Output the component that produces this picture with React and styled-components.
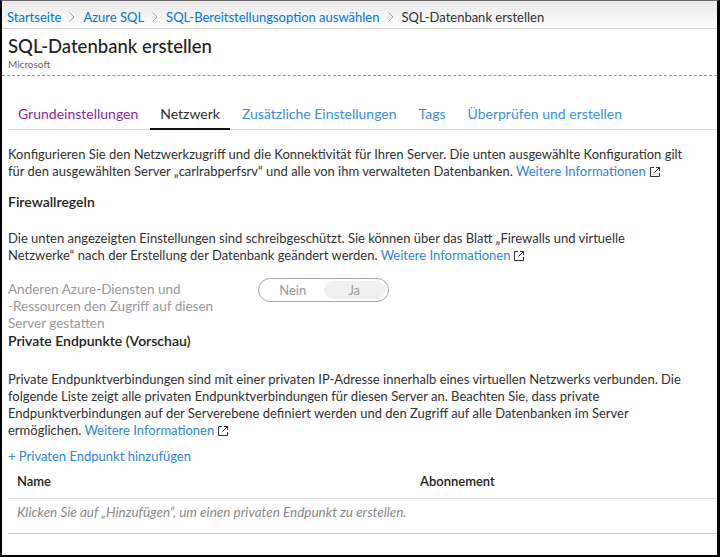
import React from 'react';
import styled, { createGlobalStyle } from 'styled-components';

const GlobalStyle = createGlobalStyle`
  body {
    margin: 0;
    background: #fff;
    font-family: Lato, "Noto Sans", sans-serif;
    color: #323130;
  }
`;

const Frame = styled.div`
  box-sizing: border-box;
  width: 720px;
  height: 557px;
  border-top: 1px solid #6b6b6b;
  border-left: 2px solid #000;
  border-right: 3px solid #000;
  border-bottom: 2px solid #000;
  overflow: hidden;
  background: #fff;
`;

const Breadcrumb = styled.nav`
  box-sizing: border-box;
  height: 28px;
  display: flex;
  align-items: center;
  padding: 4px 5px 0;
  background: linear-gradient(#e9e9e9, #fdfdfd);
  border-bottom: 1px solid #d0d0d0;
  font-size: 13px;
`;

const Crumb = styled.span`
  color: ${p => (p.current ? '#323130' : '#0078d4')};
`;

const Chevron = styled.span`
  display: inline-flex;
  margin: 0 8px;
`;

const Header = styled.header`
  padding: 5px 6px 5px;
  border-bottom: 1px dashed #2bc3ea;
`;

const Title = styled.h1`
  margin: 0;
  font-size: 18.5px;
  font-weight: 500;
  line-height: 24px;
  color: #222;
`;

const Sub = styled.div`
  font-size: 10px;
  color: #666;
  line-height: 12px;
`;

const Body = styled.main`
  padding: 0 0 0 6px;
`;

const TabList = styled.div`
  margin-top: 28px;
  display: flex;
  gap: 2px;
  border-bottom: 1px solid #d6d6d6;
`;

const Tab = styled.div`
  padding: 0 10px;
  height: 26px;
  line-height: 20px;
  font-size: 14px;
  color: ${p => (p.active ? '#323130' : p.visited ? '#8a2a9b' : '#3a8fdc')};
  border-bottom: 2px solid ${p => (p.active ? '#111' : 'transparent')};
  margin-bottom: -1px;
  box-sizing: border-box;
`;

const Para = styled.p`
  margin: ${p => p.mt || 0}px 6px 0 0;
  font-size: 13px;
  line-height: 17px;
`;

const Heading = styled.h2`
  margin: ${p => p.mt || 0}px 0 0;
  font-size: 14px;
  line-height: 17px;
  font-weight: 600;
  color: #222;
`;

const Link = styled.a`
  color: #2f86d4;
  text-decoration: none;

  svg {
    margin-left: 4px;
    vertical-align: -1px;
  }
`;

const ToggleRow = styled.div`
  margin-top: 17px;
  display: grid;
  grid-template-columns: 250px auto;
  align-items: start;
`;

const MutedLabel = styled.div`
  font-size: 13.5px;
  line-height: 17px;
  color: #9a9a9a;
`;

const Toggle = styled.div`
  margin-top: -3px;
  width: 131px;
  height: 24px;
  box-sizing: border-box;
  border: 1px solid #a6a6a6;
  border-radius: 12px;
  display: flex;
  padding: 2px 3px;
  font-size: 13px;
  color: #9a9a9a;
`;

const Segment = styled.div`
  flex: 1;
  display: flex;
  align-items: center;
  justify-content: center;
  border-radius: 9px;
  background: ${p => (p.on ? '#f0f0f0' : 'transparent')};
`;

const AddLink = styled.div`
  margin-top: 9px;
  font-size: 13px;
  line-height: 17px;
  color: #2f86d4;
`;

const Table = styled.div`
  margin-top: 0;
`;

const HeadRow = styled.div`
  display: grid;
  grid-template-columns: 403px auto;
  padding: 8px 9px 8px;
  font-size: 13px;
  line-height: 17px;
  font-weight: 600;
  color: #222;
  border-bottom: 1px solid #e4e4e4;
`;

const EmptyRow = styled.div`
  padding: 5px 9px 12px;
  font-size: 13.5px;
  line-height: 17px;
  font-style: italic;
  color: #8a8a8a;
  border-bottom: 1px solid #c8c8c8;
`;

const ExtIcon = () => (
  <svg width="10" height="10" viewBox="0 0 10 10" fill="none" stroke="#323130" strokeWidth="1">
    <path d="M4 0.5H0.5V9.5H9.5V6" />
    <path d="M6 0.5H9.5V4" />
    <path d="M9.5 0.5L4.5 5.5" />
  </svg>
);

const ChevronIcon = () => (
  <svg width="6" height="10" viewBox="0 0 6 10" fill="none" stroke="#a0a0a0" strokeWidth="1">
    <path d="M0.5 0.5L5 5L0.5 9.5" />
  </svg>
);

const More = () => (
  <Link href="#">Weitere Informationen<ExtIcon /></Link>
);

export default function App() {
  return (
    <Frame>
      <GlobalStyle />
      <Breadcrumb>
        <Crumb>Startseite</Crumb>
        <Chevron><ChevronIcon /></Chevron>
        <Crumb>Azure SQL</Crumb>
        <Chevron><ChevronIcon /></Chevron>
        <Crumb>SQL-Bereitstellungsoption auswählen</Crumb>
        <Chevron><ChevronIcon /></Chevron>
        <Crumb current>SQL-Datenbank erstellen</Crumb>
      </Breadcrumb>
      <Header>
        <Title>SQL-Datenbank erstellen</Title>
        <Sub>Microsoft</Sub>
      </Header>
      <Body>
        <TabList>
          <Tab visited>Grundeinstellungen</Tab>
          <Tab active>Netzwerk</Tab>
          <Tab>Zusätzliche Einstellungen</Tab>
          <Tab>Tags</Tab>
          <Tab>Überprüfen und erstellen</Tab>
        </TabList>
        <Para mt={16}>
          Konfigurieren Sie den Netzwerkzugriff und die Konnektivität für Ihren Server. Die unten ausgewählte Konfiguration gilt
          <br />
          für den ausgewählten Server „carlrabperfsrv“ und alle von ihm verwalteten Datenbanken. <More />
        </Para>
        <Heading mt={13}>Firewallregeln</Heading>
        <Para mt={20}>
          Die unten angezeigten Einstellungen sind schreibgeschützt. Sie können über das Blatt „Firewalls und virtuelle
          <br />
          Netzwerke“ nach der Erstellung der Datenbank geändert werden. <More />
        </Para>
        <ToggleRow>
          <MutedLabel>
            Anderen Azure-Diensten und
            <br />
            -Ressourcen den Zugriff auf diesen
            <br />
            Server gestatten
          </MutedLabel>
          <Toggle>
            <Segment>Nein</Segment>
            <Segment on>Ja</Segment>
          </Toggle>
        </ToggleRow>
        <Heading mt={0}>Private Endpunkte (Vorschau)</Heading>
        <Para mt={22}>
          Private Endpunktverbindungen sind mit einer privaten IP-Adresse innerhalb eines virtuellen Netzwerks verbunden. Die
          <br />
          folgende Liste zeigt alle privaten Endpunktverbindungen für diesen Server an. Beachten Sie, dass private
          <br />
          Endpunktverbindungen auf der Serverebene definiert werden und den Zugriff auf alle Datenbanken im Server
          <br />
          ermöglichen. <More />
        </Para>
        <AddLink>+ Privaten Endpunkt hinzufügen</AddLink>
        <Table>
          <HeadRow>
            <span>Name</span>
            <span>Abonnement</span>
          </HeadRow>
          <EmptyRow>Klicken Sie auf „Hinzufügen“, um einen privaten Endpunkt zu erstellen.</EmptyRow>
        </Table>
      </Body>
    </Frame>
  );
}
